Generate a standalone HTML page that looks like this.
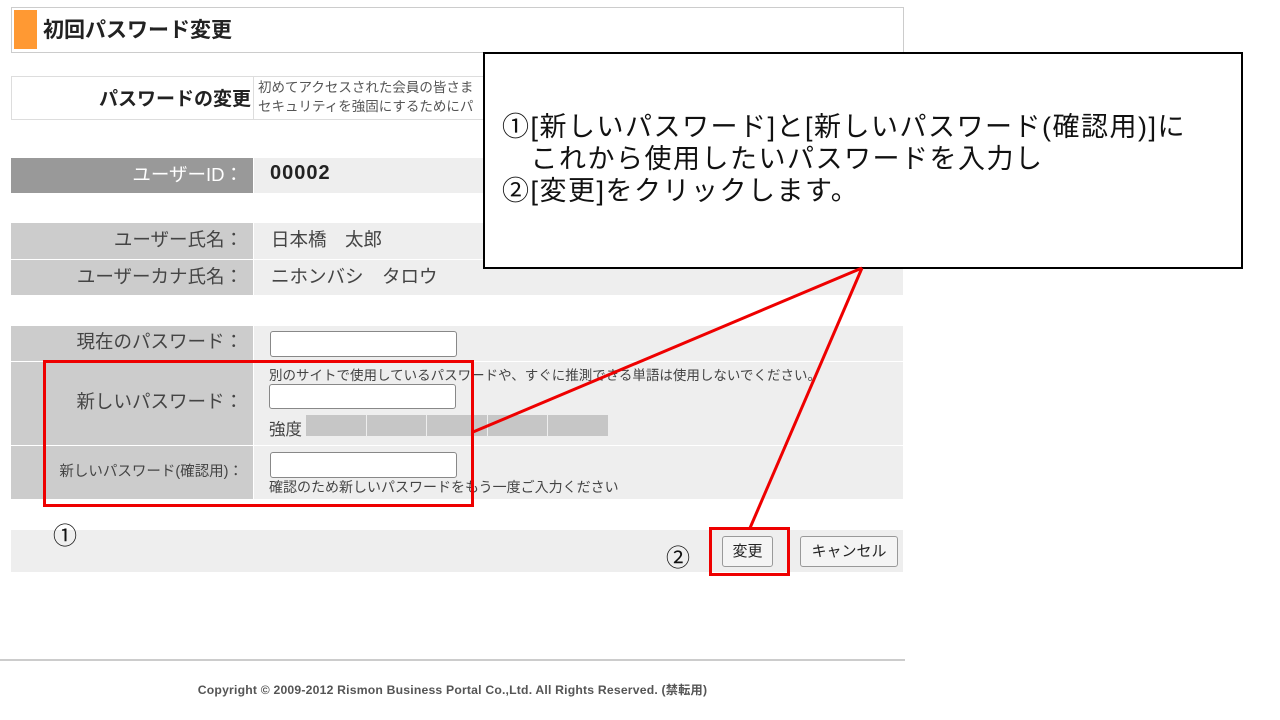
<!DOCTYPE html>
<html><head><meta charset="utf-8"><style>
body{margin:0;width:1280px;height:720px;background:#fff;position:relative;overflow:hidden;font-family:"Liberation Sans","Noto Sans CJK JP",sans-serif;color:#333}
div,span{position:absolute;box-sizing:border-box}
.lab{background:#ccc;text-align:right;padding-right:10px;font-size:18.5px;color:#444;left:11px;width:242px}
.val{background:#eee;left:254px;width:649px}
.inp{background:#fff;border:1px solid #888;border-radius:3px;width:187px;height:26px}
.btn{background:#f4f4f4;border:1px solid #999;border-radius:3px;font-size:15px;text-align:center;line-height:30px;color:#222}
</style></head><body>
<div style="left:11px;top:7px;width:893px;height:46px;border:1px solid #ccc"></div>
<div style="left:14px;top:10px;width:23px;height:39px;background:#f93"></div>
<div style="left:43px;top:14px;font-size:21px;font-weight:bold;color:#222">初回パスワード変更</div>

<div style="left:11px;top:76px;width:893px;height:44px;border:1px solid #ddd"></div>
<div style="left:253px;top:77px;width:1px;height:42px;background:#ddd"></div>
<div style="left:11px;top:84px;width:240px;text-align:right;font-size:19px;font-weight:bold;color:#222">パスワードの変更</div>
<div style="left:258px;top:78px;font-size:13.5px;line-height:19px;color:#555">初めてアクセスされた会員の皆さま<br>セキュリティを強固にするためにパ</div>

<div class="lab" style="top:158px;height:35px;background:#999;color:#fff;line-height:33px">ユーザーID：</div>
<div class="val" style="top:158px;height:35px"></div>
<div style="left:270px;top:162px;font-size:20px;font-weight:bold;color:#222;letter-spacing:1px">00002</div>

<div class="lab" style="top:223px;height:36px;line-height:34px">ユーザー氏名：</div>
<div class="val" style="top:223px;height:36px;font-size:18.5px;line-height:34px;padding-left:17px;color:#444">日本橋　太郎</div>
<div class="lab" style="top:260px;height:35px;line-height:34px">ユーザーカナ氏名：</div>
<div class="val" style="top:260px;height:35px;font-size:18.5px;line-height:34px;padding-left:17px;color:#444">ニホンバシ　タロウ</div>

<div class="lab" style="top:326px;height:35px;line-height:32px">現在のパスワード：</div>
<div class="val" style="top:326px;height:35px"></div>
<div class="inp" style="left:270px;top:331px"></div>

<div class="lab" style="top:362px;height:83px;line-height:80px">新しいパスワード：</div>
<div class="val" style="top:362px;height:83px"></div>
<div style="left:269px;top:364px;font-size:13.5px;color:#444">別のサイトで使用しているパスワードや、すぐに推測できる単語は使用しないでください。</div>
<div class="inp" style="left:269px;top:384px;height:25px"></div>
<div style="left:269px;top:416px;font-size:16.5px;color:#444">強度</div>
<div style="left:306px;top:415px;width:302px;height:21px;background:#c6c6c6"></div>
<div style="left:366px;top:415px;width:1px;height:21px;background:#eee"></div>
<div style="left:426px;top:415px;width:1px;height:21px;background:#eee"></div>
<div style="left:487px;top:415px;width:1px;height:21px;background:#eee"></div>
<div style="left:547px;top:415px;width:1px;height:21px;background:#eee"></div>

<div class="lab" style="top:446px;height:53px;line-height:52px;font-size:14.5px">新しいパスワード(確認用)：</div>
<div class="val" style="top:446px;height:53px"></div>
<div class="inp" style="left:270px;top:452px"></div>
<div style="left:269px;top:477px;font-size:14px;color:#444">確認のため新しいパスワードをもう一度ご入力ください</div>

<div style="left:11px;top:530px;width:892px;height:42px;background:#eee"></div>
<div style="left:53px;top:516px;font-size:24px;color:#111">①</div>
<div style="left:666px;top:538px;font-size:24px;color:#111">②</div>
<div class="btn" style="left:722px;top:536px;width:51px;height:31px">変更</div>
<div class="btn" style="left:800px;top:536px;width:98px;height:31px">キャンセル</div>

<div style="left:0;top:659px;width:905px;height:2px;background:#ccc"></div>
<div style="left:0;top:680px;width:905px;text-align:center;font-size:12.2px;font-weight:bold;color:#555;letter-spacing:0.2px">Copyright © 2009-2012 Rismon Business Portal Co.,Ltd. All Rights Reserved. (禁転用)</div>

<div style="left:483px;top:52px;width:760px;height:217px;border:2px solid #000;background:#fff"></div>
<div style="left:502px;top:111px;font-size:27px;line-height:32px;letter-spacing:1.5px;color:#111">①[新しいパスワード]と[新しいパスワード(確認用)]に<br>　これから使用したいパスワードを入力し<br>②[変更]をクリックします。</div>

<div style="left:43px;top:360px;width:431px;height:147px;border:3px solid #e00"></div>
<div style="left:709px;top:527px;width:81px;height:49px;border:3px solid #e00"></div>
<svg style="position:absolute;left:0;top:0" width="1280" height="720"><line x1="473" y1="432" x2="862" y2="268" stroke="#e00" stroke-width="3"/><line x1="750" y1="528" x2="862" y2="268" stroke="#e00" stroke-width="3"/></svg>
</body></html>
